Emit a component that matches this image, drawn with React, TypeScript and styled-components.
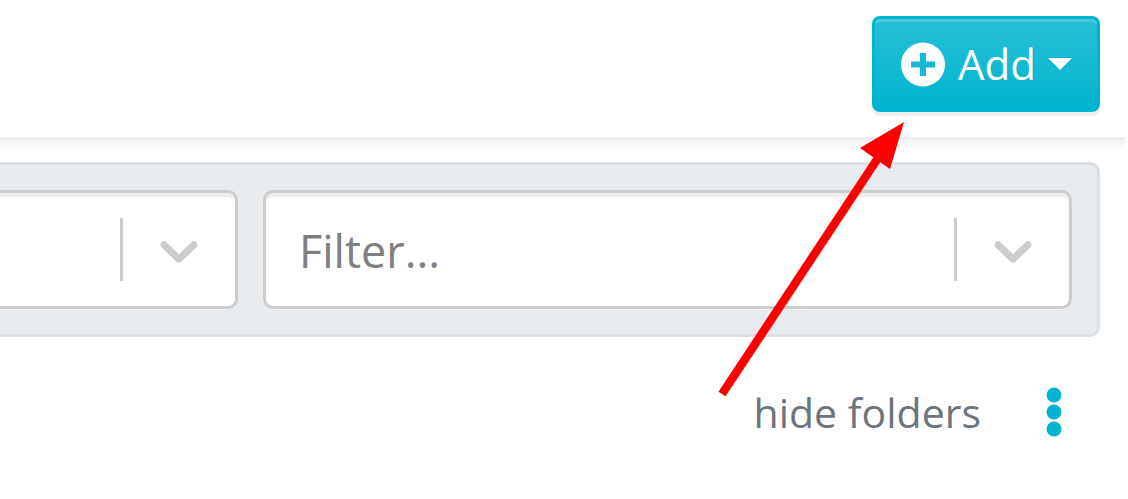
import React from "react";
import styled, { createGlobalStyle } from "styled-components";

const GlobalStyle = createGlobalStyle`
  *, *::before, *::after { box-sizing: border-box; }
  body {
    margin: 0;
    background: #fff;
    font-family: "Open Sans", "Noto Sans", sans-serif;
  }
  button, select { font-family: inherit; }
`;

const Page = styled.div`
  position: relative;
  padding-right: 3px;
  overflow: hidden;
`;

const Header = styled.header`
  display: flex;
  justify-content: flex-end;
  padding: 16px 25px 25px;
`;

const HeaderEdge = styled.div`
  height: 13px;
  border-top: 3px solid #eeeeee;
  background: linear-gradient(180deg, #f3f3f3, #ffffff);
`;

const AddButton = styled.button`
  display: flex;
  align-items: center;
  gap: 12px;
  height: 96px;
  padding: 0 25px;
  border: 3px solid #00b4cf;
  border-radius: 8px;
  background: linear-gradient(180deg, #26bfd6, #00b4cf);
  box-shadow: inset 0 3px 0 rgba(255, 255, 255, 0.15), 0 4px 1px rgba(0, 0, 0, 0.07);
  color: #fff;
  font-size: 42px;
  line-height: 56px;
  cursor: pointer;
`;

const Caret = styled.span`
  border: 12px solid transparent;
  border-top-color: #fff;
  border-bottom: 0;
`;

const FilterBar = styled.section`
  display: flex;
  gap: 25px;
  margin: 12px 25px 0 0;
  padding: 25px 25px 25px 0;
  border: 3px solid #dce0e3;
  border-left: 0;
  border-radius: 0 10px 10px 0;
  background: #e7ebee;
`;

const SelectBox = styled.div<{ $clipped?: boolean }>`
  display: grid;
  grid-template-columns: 1fr auto auto;
  align-items: center;
  flex: ${(p) => (p.$clipped ? "0 0 238px" : "1 1 0")};
  min-width: 0;
  height: 119px;
  border: 3px solid #cccccc;
  border-left-width: ${(p) => (p.$clipped ? 0 : 3)}px;
  border-radius: ${(p) => (p.$clipped ? "0 10px 10px 0" : "10px")};
  background: #fff;
  box-shadow: inset 0 4px 1px rgba(0, 0, 0, 0.07);
`;

const Select = styled.select`
  grid-area: 1 / 1 / 2 / -1;
  width: 100%;
  height: 100%;
  padding: 2px 144px 0 33px;
  border: 0;
  appearance: none;
  background: transparent;
  color: #808080;
  font-size: 45px;
`;

const Separator = styled.span`
  grid-area: 1 / 2;
  width: 3px;
  height: 63px;
  background: #cccccc;
  pointer-events: none;
`;

const Chevron = styled.svg`
  grid-area: 1 / 3;
  width: 64px;
  height: 64px;
  margin: 0 24px;
  fill: #cccccc;
  pointer-events: none;
`;

const Actions = styled.div`
  display: flex;
  justify-content: flex-end;
  align-items: center;
  gap: 64px;
  padding: 43px 62px 55px;
`;

const TextButton = styled.button`
  padding: 0;
  border: 0;
  background: none;
  color: #6c757d;
  font-size: 41px;
  line-height: 64px;
  cursor: pointer;
`;

const MenuButton = styled.button`
  display: flex;
  padding: 0;
  border: 0;
  background: none;
  color: #00b4cf;
  cursor: pointer;
`;

const Pointer = styled.svg`
  position: absolute;
  top: 118px;
  right: 216px;
  pointer-events: none;
`;

function Dropdown({ label, text, clipped }: { label: string; text: string; clipped?: boolean }) {
  return (
    <SelectBox $clipped={clipped}>
      <Select aria-label={label}>
        <option>{text}</option>
      </Select>
      <Separator />
      <Chevron viewBox="0 0 20 20" aria-hidden="true">
        <path d="M4.516 7.548c0.436-0.446 1.043-0.481 1.576 0l3.908 3.747 3.908-3.747c0.533-0.481 1.141-0.446 1.574 0 0.436 0.445 0.408 1.197 0 1.615-0.406 0.418-4.695 4.502-4.695 4.502-0.217 0.223-0.502 0.335-0.787 0.335s-0.57-0.112-0.789-0.335c0 0-4.287-4.084-4.695-4.502s-0.436-1.17 0-1.615z" />
      </Chevron>
    </SelectBox>
  );
}

export default function App() {
  return (
    <Page>
      <GlobalStyle />
      <Header>
        <AddButton type="button">
          <svg width="46" height="46" viewBox="0 0 46 46" aria-hidden="true">
            <circle cx="23" cy="23.5" r="22" fill="#ffffff" />
            <path d="M11 23.5H35M23 12V35" stroke="#14bad2" strokeWidth="6" />
          </svg>
          Add
          <Caret />
        </AddButton>
      </Header>
      <HeaderEdge />
      <main>
        <FilterBar>
          <Dropdown label="Sort" text="" clipped />
          <Dropdown label="Filter" text="Filter..." />
        </FilterBar>
        <Actions>
          <TextButton type="button">hide folders</TextButton>
          <MenuButton type="button" aria-label="More options">
            <svg width="18" height="52" viewBox="0 0 18 52" fill="currentColor" aria-hidden="true">
              <circle cx="9" cy="9" r="7.5" />
              <circle cx="9" cy="26" r="7.5" />
              <circle cx="9" cy="43" r="7.5" />
            </svg>
          </MenuButton>
        </Actions>
      </main>
      <Pointer width="200" height="284" viewBox="0 0 200 284" aria-hidden="true">
        <path d="M10 276L166 40" stroke="#ff0000" strokeWidth="8.5" />
        <path d="M192 4L148 30L178 51Z" fill="#ff0000" />
      </Pointer>
    </Page>
  );
}
